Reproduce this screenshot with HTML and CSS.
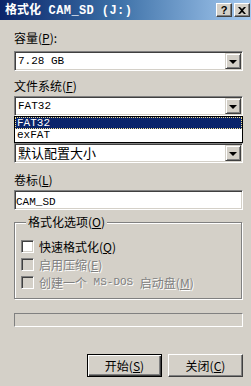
FILE: index.html
```html
<!DOCTYPE html>
<html lang="zh-CN">
<head>
  <meta charset="UTF-8">
  <title>格式化 CAM_SD (J:)</title>
  <link rel="stylesheet" href="styles.css">
</head>
<body>
  <div class="window">
    <div class="titlebar">
      <span class="title">格式化<span class="lat"> CAM_SD (J:)</span></span>
      <div class="caption-btns">
        <span class="cap-btn">?</span>
        <span class="cap-btn">
          <svg width="8" height="7" viewBox="0 0 8 7"><path d="M0 0h2l2 2 2-2h2L5 3.5 8 7H6L4 5 2 7H0l3-3.5z" fill="#000"/></svg>
        </span>
      </div>
    </div>

    <div class="content">
      <div class="label first">容量(<u>P</u>):</div>
      <div class="combo">
        <span class="combo-text lat">7.28 GB</span>
        <span class="drop-btn"><i class="arrow"></i></span>
      </div>

      <div class="label second">文件系统(<u>F</u>)</div>
      <div class="combo open">
        <span class="combo-text lat">FAT32</span>
        <span class="drop-btn"><i class="arrow"></i></span>
      </div>
      <ul class="droplist">
        <li class="sel lat">FAT32</li>
        <li class="lat">exFAT</li>
      </ul>

      <div class="combo">
        <span class="combo-text big">默认配置大小</span>
        <span class="drop-btn"><i class="arrow"></i></span>
      </div>

      <div class="label third">卷标(<u>L</u>)</div>
      <div class="edit"><span class="lat">CAM_SD</span></div>

      <fieldset class="group">
        <legend>格式化选项(<u>O</u>)</legend>
        <div class="check"><span class="box"></span>快速格式化(<u>Q</u>)</div>
        <div class="check disabled"><span class="box"></span>启用压缩(<u>E</u>)</div>
        <div class="check disabled"><span class="box"></span>创建一个<span class="lat"> MS-DOS </span>启动盘(<u>M</u>)</div>
      </fieldset>

      <div class="progress"></div>

      <div class="buttons">
        <button type="button" class="btn default">开始(<u>S</u>)</button>
        <button type="button" class="btn">关闭(<u>C</u>)</button>
      </div>
    </div>
  </div>
</body>
</html>
```

FILE: styles.css
```css
body { margin: 0; background: #d4d0c8; font-family: "Noto Sans CJK SC", "Noto Sans", sans-serif; font-size: 12px; color: #000; }
.window { width: 251px; height: 386px; box-sizing: border-box; background: #d4d0c8; overflow: hidden; }
.lat { font-family: "Liberation Mono", monospace; font-size: 11px; white-space: pre; }

/* title bar */
.titlebar { height: 20px; display: flex; align-items: center; justify-content: space-between; padding: 0 1px 0 5px; background: linear-gradient(to right, #0a246a 0%, #3a6ea5 45%, #a6caf0 100%); }
.title { color: #fff; font-weight: bold; font-size: 12px; line-height: 14px; white-space: nowrap; }
.title .lat { font-size: 12px; font-weight: bold; letter-spacing: 0.4px; }
.caption-btns { display: flex; gap: 2px; }
.cap-btn { width: 14px; height: 12px; display: flex; align-items: center; justify-content: center; background: #d4d0c8; border: 1px solid; border-color: #fff #404040 #404040 #fff; box-shadow: inset -1px -1px 0 #808080; font-family: "Liberation Sans", sans-serif; font-weight: bold; font-size: 11px; line-height: 12px; }

.content { padding: 12px 8px 0 14px; }
.label { height: 12px; line-height: 12px; white-space: nowrap; }
.label.first { margin-bottom: 7px; }
.label.second { margin-top: 9px; margin-bottom: 4px; }
.label.third { margin-top: 11px; margin-bottom: 4px; }

/* combo boxes */
.combo { height: 20px; box-sizing: border-box; display: flex; align-items: center; justify-content: space-between; background: #fff; border: 1px solid; border-color: #808080 #fff #fff #808080; box-shadow: inset 1px 1px 0 #404040, inset -1px -1px 0 #d4d0c8; padding: 1px; }
.combo-text { padding-left: 2px; line-height: 16px; }
.combo-text.big { font-size: 13px; }
.drop-btn { width: 16px; height: 16px; box-sizing: border-box; display: flex; align-items: center; justify-content: center; background: #d4d0c8; border: 1px solid; border-color: #d4d0c8 #404040 #404040 #d4d0c8; box-shadow: inset 1px 1px 0 #fff, inset -1px -1px 0 #808080; }
.arrow { width: 0; height: 0; border-left: 4px solid transparent; border-right: 4px solid transparent; border-top: 4px solid #000; margin-top: 1px; }

/* open drop-down list of the file system combo */
.droplist { margin: 0; padding: 0; list-style: none; background: #fff; border: 1px solid #000; }
.droplist li { height: 12px; line-height: 12px; padding-left: 2px; }
.droplist li + li { height: 13px; line-height: 13px; }
.droplist li.sel { background: #0a246a; color: #fff; outline: 1px dotted #f4e08c; outline-offset: -1px; }

/* edit box */
.edit { height: 20px; box-sizing: border-box; background: #fff; border: 1px solid; border-color: #808080 #fff #fff #808080; box-shadow: inset 1px 1px 0 #404040, inset -1px -1px 0 #d4d0c8; padding: 1px 1px; line-height: 16px; margin-bottom: 6px; }

/* group box */
.group { margin: 0 1px 0 0; padding: 12px 0 9px 6px; border: 1px solid #808080; box-shadow: inset 1px 1px 0 #fff, 1px 1px 0 #fff; }
.group legend { padding: 0 2px; margin-left: 5px; background: #d4d0c8; line-height: 12px; }
.check { display: flex; align-items: center; height: 13px; line-height: 13px; margin-bottom: 5px; white-space: nowrap; }
.check:last-child { margin-bottom: 0; }
.box { width: 13px; height: 13px; box-sizing: border-box; margin-right: 5px; background: #fff; border: 1px solid; border-color: #808080 #fff #fff #808080; box-shadow: inset 1px 1px 0 #404040, inset -1px -1px 0 #d4d0c8; }
.check.disabled { color: #808080; text-shadow: 1px 1px 0 #fff; }
.check.disabled .box { background: #d4d0c8; }

/* progress */
.progress { height: 14px; box-sizing: border-box; margin-top: 14px; border: 1px solid; border-color: #808080 #fff #fff #808080; }

/* buttons */
.buttons { display: flex; justify-content: flex-end; gap: 6px; margin-top: 27px; }
.btn { width: 75px; height: 23px; padding: 0; font-family: inherit; font-size: 12px; background: #d4d0c8; border: 1px solid; border-color: #fff #404040 #404040 #fff; box-shadow: inset -1px -1px 0 #808080; color: #000; }
.btn.default { border-color: #000; box-shadow: inset 1px 1px 0 #fff, inset -1px -1px 0 #404040, inset -2px -2px 0 #808080; }
```
